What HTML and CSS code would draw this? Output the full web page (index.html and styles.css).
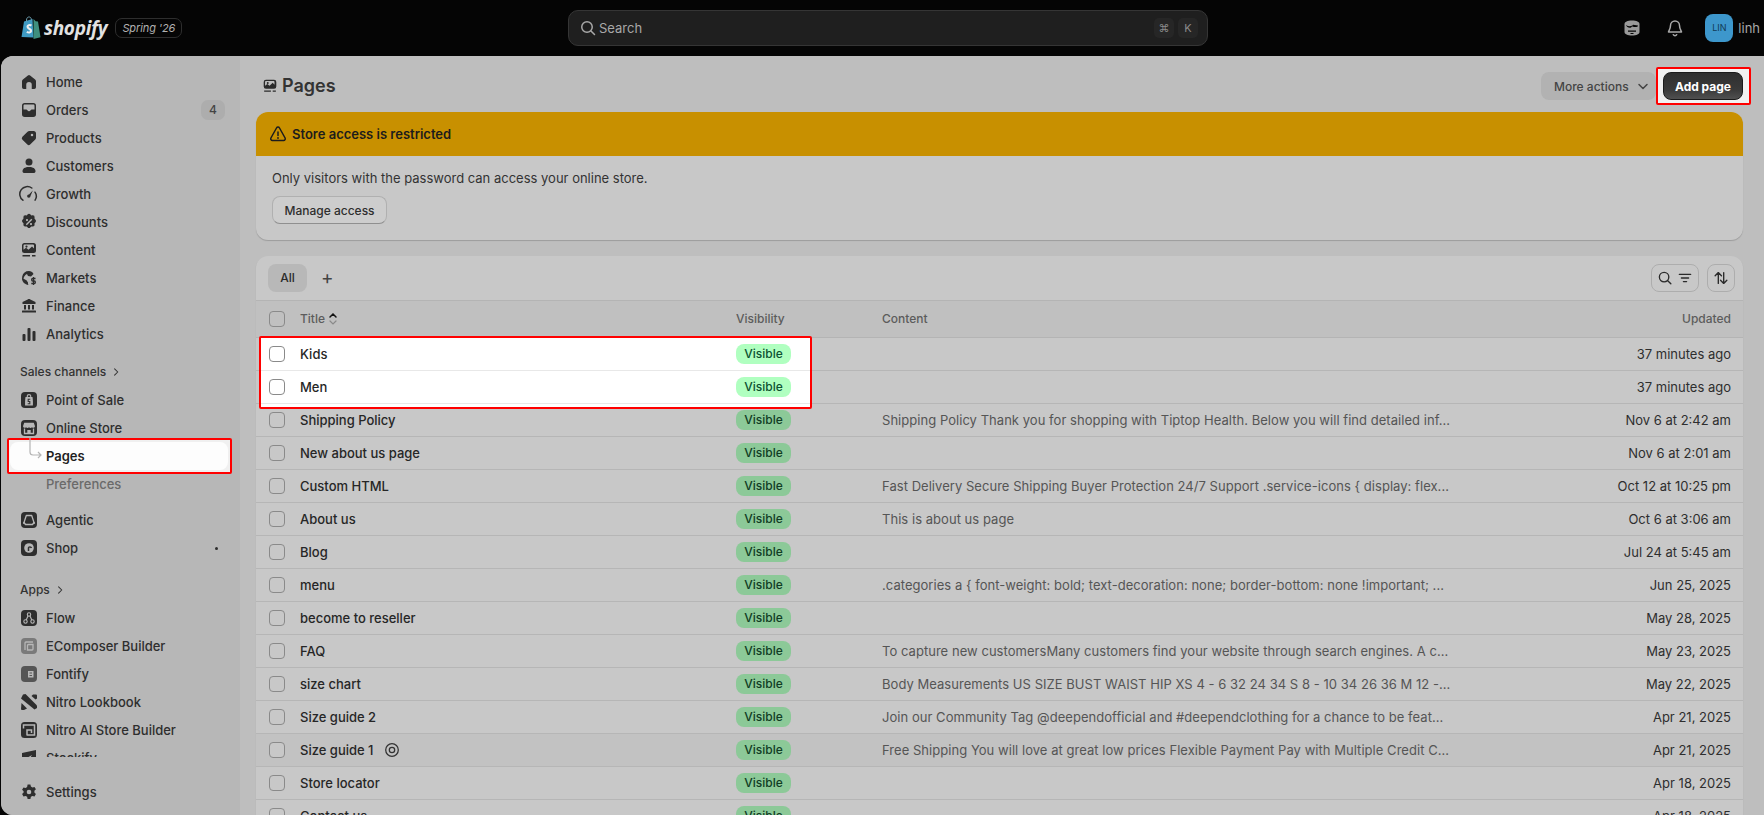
FILE: index.html
```html
<!DOCTYPE html>
<html lang="en">
<head>
    <meta charset="UTF-8">
    <title>Pages - Shopify</title>
    <link rel="stylesheet" href="styles.css">
</head>
<body>
    <svg class="sprite" xmlns="http://www.w3.org/2000/svg">
        <symbol id="i-home" viewBox="0 0 20 20"><path d="M8.900 3.400a1.750 1.750 0 0 1 2.200 0l5 4.100c.57.47.9 1.170.9 1.900v5.850A1.750 1.750 0 0 1 15.250 17h-2.500v-4.250a2.750 2.750 0 0 0-5.500 0V17h-2.500A1.750 1.750 0 0 1 3 15.250V9.400c0-.73.33-1.430.9-1.900z"/></symbol>
        <symbol id="i-orders" viewBox="0 0 20 20"><path fill-rule="evenodd" d="M5.750 3A2.750 2.750 0 0 0 3 5.750v8.500A2.750 2.750 0 0 0 5.750 17h8.500A2.750 2.750 0 0 0 17 14.250v-8.500A2.750 2.750 0 0 0 14.250 3zM4.500 5.750c0-.69.56-1.250 1.250-1.250h8.500c.69 0 1.250.56 1.250 1.250V9.500h-2.700c-.55 0-.95.3-1.200.8-.3.6-.9.95-1.600.95s-1.300-.35-1.600-.95c-.25-.5-.65-.8-1.200-.8H4.500z"/></symbol>
        <symbol id="i-products" viewBox="0 0 20 20"><path fill-rule="evenodd" d="M10.300 3h4.200A2.500 2.500 0 0 1 17 5.500v4.200c0 .66-.26 1.300-.73 1.770l-5.100 5.100a2 2 0 0 1-2.830 0l-4.900-4.900a2 2 0 0 1 0-2.840l5.100-5.100A2.500 2.500 0 0 1 10.300 3zM13 8.250a1.250 1.250 0 1 0 0-2.500 1.250 1.250 0 0 0 0 2.500z"/></symbol>
        <symbol id="i-customers" viewBox="0 0 20 20"><circle cx="10" cy="6" r="3.500"/><path d="M3.500 15.200c0-2.600 2.400-4.200 6.500-4.200s6.500 1.600 6.500 4.200c0 1.100-.8 1.800-2 1.800h-9c-1.200 0-2-.7-2-1.800z"/></symbol>
        <symbol id="i-growth" viewBox="0 0 20 20"><path fill="none" stroke="currentColor" stroke-width="1.500" stroke-linecap="round" d="M3.900 16.200A7.200 7.200 0 0 1 12.800 4M16 8.200A7.200 7.200 0 0 1 16.100 16.200"/><path d="M13.800 6.400 11.500 12a1.700 1.700 0 1 1-1.500-1.600z"/></symbol>
        <symbol id="i-discounts" viewBox="0 0 20 20"><path fill-rule="evenodd" d="M8.500 2.600a2 2 0 0 1 3 0l.8.8 1.100-.1a2 2 0 0 1 2.200 2.200l-.1 1.100.8.8a2 2 0 0 1 0 3l-.8.8.1 1.100a2 2 0 0 1-2.200 2.200l-1.100-.1-.8.8a2 2 0 0 1-3 0l-.8-.8-1.100.1a2 2 0 0 1-2.200-2.200l.1-1.100-.8-.8a2 2 0 0 1 0-3l.8-.8-.1-1.100a2 2 0 0 1 2.200-2.200l1.100.1zM12.300 6.800l-5.500 5.400 1 1 5.500-5.400zM8 7a1.100 1.100 0 1 0 0 2.200A1.100 1.100 0 0 0 8 7zm4 4a1.100 1.100 0 1 0 0 2.200 1.100 1.100 0 0 0 0-2.200z"/></symbol>
        <symbol id="i-content" viewBox="0 0 20 20"><path fill-rule="evenodd" d="M5.500 3h9A2.500 2.500 0 0 1 17 5.500v5a2.500 2.500 0 0 1-2.500 2.500h-9A2.500 2.500 0 0 1 3 10.500v-5A2.500 2.500 0 0 1 5.500 3zm0 1.500a1 1 0 0 0-1 1v4.300l2.500-2 2.500 2 3.500-3.300 2 2V5.500a1 1 0 0 0-1-1zM7.500 5.500a1.100 1.100 0 1 0 0 2.200 1.100 1.100 0 0 0 0-2.200z"/><path d="M3.500 15h7.500v1.500H3.500zM13 15h3.500v1.500H13z"/></symbol>
        <symbol id="i-markets" viewBox="0 0 20 20"><path d="M10 3a7 7 0 0 0-3 13.300c.6.300 1.400.6 2.400.7-.4-.8-.5-1.600-.4-2.500l-1.500-2.200-3-1.500c.2-2.200 1.600-4 3.500-4.900l1 2 3 .5 2.500-2.500C13.500 3.900 11.800 3 10 3z"/><path fill="none" stroke="currentColor" stroke-width="1.300" d="M16.500 10.500h-2.800c-1.400 0-1.400 2.500 0 2.500h1.600c1.400 0 1.400 2.500 0 2.500h-3M14.500 9v8"/></symbol>
        <symbol id="i-finance" viewBox="0 0 20 20"><path d="M8.700 3.400c.8-.4 1.800-.4 2.600 0l5.200 2.700V8H3.500V6.100zM5 9h2v4.500H5zM9 9h2v4.500H9zM13 9h2v4.500h-2zM3.500 14.500h13c.3 0 .5.200.5.500v1.500H3V15c0-.3.200-.5.500-.5z"/></symbol>
        <symbol id="i-analytics" viewBox="0 0 20 20"><rect x="3.500" y="10" width="3" height="7" rx="1"/><rect x="8.500" y="4" width="3" height="13" rx="1"/><rect x="13.500" y="7" width="3" height="10" rx="1"/></symbol>
        <symbol id="i-settings" viewBox="0 0 20 20"><path fill-rule="evenodd" d="M8.600 2.500h2.800l.5 2.100 1.500.9 2.100-.6 1.400 2.400-1.500 1.500v1.800l1.500 1.500-1.400 2.400-2.100-.6-1.500.9-.5 2.100H8.600l-.5-2.100-1.500-.9-2.100.6-1.400-2.400 1.500-1.500V9.300L3.100 7.800l1.400-2.400 2.100.6 1.500-.9zM10 7.700a2.300 2.300 0 1 0 0 4.600 2.300 2.300 0 0 0 0-4.600z"/></symbol>
        <symbol id="i-pos" viewBox="0 0 20 20"><rect x="2" y="2" width="16" height="16" rx="4"/><path fill="#b7b7b7" d="M6.500 7h7c.4 2.500.5 5.500.4 8.500H6.100c-.1-3 0-6 .4-8.500z"/><path fill="none" stroke="#b7b7b7" stroke-width="1.100" d="M8.300 7V5.800c0-1.600 3.400-1.600 3.400 0V7"/><path fill="none" stroke="#333" stroke-width="1.100" d="M11.300 9.300H9.200v2.200h1.600v2.200H8.700"/></symbol>
        <symbol id="i-store" viewBox="0 0 20 20"><rect x="2" y="2" width="16" height="16" rx="4"/><path fill="#b7b7b7" d="M5.200 4.800h9.600l1.200 3.500a1.800 1.800 0 0 1-3 1 2.300 2.300 0 0 1-3 0 2.300 2.300 0 0 1-3 0 1.800 1.800 0 0 1-3-1z"/><path fill="none" stroke="#b7b7b7" stroke-width="1.300" d="M5.500 10.500v5h9v-5"/><path fill="#b7b7b7" d="M8.300 12h3.400v3.500H8.300z"/></symbol>
        <symbol id="i-agentic" viewBox="0 0 20 20"><rect x="2" y="2" width="16" height="16" rx="4"/><path fill="none" stroke="#b7b7b7" stroke-width="1.300" stroke-linejoin="round" d="M7.300 5.500h5.400l2.300 7-1.500 2H6.500l-1.500-2z"/><circle cx="5" cy="13" r="1.100" fill="#b7b7b7"/><circle cx="15" cy="13" r="1.100" fill="#b7b7b7"/></symbol>
        <symbol id="i-shop" viewBox="0 0 20 20"><rect x="2" y="2" width="16" height="16" rx="4"/><circle cx="10" cy="10" r="4.800" fill="#b7b7b7"/><path fill="none" stroke="#333" stroke-width="1.500" d="M9.500 13V9.800c0-.9 2.500-1.500 3 .2"/></symbol>
        <symbol id="i-flow" viewBox="0 0 20 20"><rect x="2" y="2" width="16" height="16" rx="4"/><g fill="none" stroke="#b7b7b7" stroke-width="1.100"><circle cx="10" cy="6.500" r="1.700"/><circle cx="6.500" cy="13.500" r="1.700"/><circle cx="13.500" cy="13.500" r="1.700"/><path d="M9 8l-1.800 4M11 8l1.800 4"/></g></symbol>
        <symbol id="i-ecomposer" viewBox="0 0 20 20"><rect x="2" y="2" width="16" height="16" rx="4" fill="#7a7a7a"/><path fill="none" stroke="#b7b7b7" stroke-width="1.300" d="M6 14V7a1 1 0 0 1 1-1h7M8.500 14V9.500a1 1 0 0 1 1-1H14V13a1 1 0 0 1-1 1z"/></symbol>
        <symbol id="i-fontify" viewBox="0 0 20 20"><rect x="2" y="2" width="16" height="16" rx="4" fill="#555"/><path fill="#b7b7b7" d="M9 7h5.500v6.500H9zM10.500 8.500v1h2.500v-1zm0 2.500v1h2.500v-1z"/></symbol>
        <symbol id="i-lookbook" viewBox="0 0 20 20"><path d="M4 2.500l2.500-.5L18 13.500V16l-2.500 1.500L2 6.500z"/><path d="M2.500 11l5.500 5.500-3 1.500H3a1 1 0 0 1-1-1z"/><path d="M14 2.500h3a1 1 0 0 1 1 1v3l-1.500 1L12.500 4z"/></symbol>
        <symbol id="i-nitro" viewBox="0 0 20 20"><rect x="2" y="2" width="16" height="16" rx="3.500"/><path fill="none" stroke="#b7b7b7" stroke-width="1.500" d="M4.500 8.500V5h11v10h-8M8 15v-5h4.500v3"/></symbol>
        <symbol id="i-stockify" viewBox="0 0 20 20"><path d="M3 5l14-3v16H3zm3 6v4h2l5-8z"/></symbol>
        <symbol id="i-search" viewBox="0 0 20 20"><path fill="none" stroke="currentColor" stroke-width="1.500" stroke-linecap="round" d="M13 13l3.500 3.500"/><circle cx="9" cy="9" r="5.250" fill="none" stroke="currentColor" stroke-width="1.500"/></symbol>
        <symbol id="i-filter" viewBox="0 0 20 20"><path fill="none" stroke="currentColor" stroke-width="1.500" stroke-linecap="round" d="M3.750 6h12.500M6 10h8M8.250 14h3.500"/></symbol>
        <symbol id="i-sort" viewBox="0 0 20 20"><path fill="none" stroke="currentColor" stroke-width="1.500" stroke-linecap="round" stroke-linejoin="round" d="M7 16V4M3.500 7.500 7 4l3.500 3.500M13 4v12M9.500 12.500 13 16l3.500-3.500"/></symbol>
        <symbol id="i-chev" viewBox="0 0 20 20"><path fill="none" stroke="currentColor" stroke-width="1.500" stroke-linecap="round" stroke-linejoin="round" d="M6 8.500 10 12.500 14 8.500"/></symbol>
        <symbol id="i-right" viewBox="0 0 20 20"><path fill="none" stroke="currentColor" stroke-width="1.500" stroke-linecap="round" stroke-linejoin="round" d="M8 5.500 12.500 10 8 14.500"/></symbol>
        <symbol id="i-warn" viewBox="0 0 20 20"><path fill="none" stroke="currentColor" stroke-width="1.500" stroke-linejoin="round" d="M8.500 4 2.900 14a1.700 1.700 0 0 0 1.500 2.500h11.200a1.700 1.700 0 0 0 1.500-2.500L11.500 4a1.700 1.700 0 0 0-3 0z"/><path fill="none" stroke="currentColor" stroke-width="1.500" stroke-linecap="round" d="M10 8v3.500"/><circle cx="10" cy="14" r=".9"/></symbol>
        <symbol id="i-eye" viewBox="0 0 20 20"><circle cx="10" cy="10" r="7" fill="none" stroke="currentColor" stroke-width="1.400"/><circle cx="10" cy="10" r="3" fill="none" stroke="currentColor" stroke-width="1.400"/></symbol>
        <symbol id="i-bell" viewBox="0 0 20 20"><path fill="none" stroke="currentColor" stroke-width="1.500" stroke-linejoin="round" d="M10 3a4.500 4.500 0 0 0-4.500 4.500c0 3.500-2 5.500-2 6.500h13c0-1-2-3-2-6.500A4.500 4.500 0 0 0 10 3z"/><path fill="none" stroke="currentColor" stroke-width="1.500" stroke-linecap="round" d="M8.300 16.700a2 2 0 0 0 3.400 0"/></symbol>
        <symbol id="i-db" viewBox="0 0 20 20"><path d="M2.500 6c0-2 3-3.500 7.500-3.500S17.500 4 17.500 6v8c0 2-3 3.500-7.500 3.500S2.500 16 2.500 14z"/><path fill="#050505" d="M4 7c2.500 1.700 6 1.500 7-.3l5 .8c0 1-1 1.500-3 1.500-1.500 0-2.500-.5-3-.5l-1 1c-2 .7-4.500-.5-5-2.500zM6 12.500h8v1.300H6zM8.500 15h3v1h-3z"/></symbol>
    </svg>

    <header class="topbar">
        <div class="brand">
            <svg class="bag" viewBox="0 0 20 24">
                <path fill="#3f9bc4" d="M1 21 3.500 5.500 12 3l1 18.500z"/>
                <path fill="#3f8f7e" d="M13 3l2.200 2.200 2.300.2L20 21.300 13 23z"/>
                <path fill="none" stroke="#6f9fb0" stroke-width="1" d="M6 5.500V4c0-2 1.500-3.300 3-3s2 2 2 3.500"/>
                <path fill="none" stroke="#eeeeee" stroke-width="2.100" d="M11 9.500c-2-1-4-.2-4 1.300 0 2 4 2 3.600 4.300-.3 1.600-2.600 1.700-4.300.7"/>
            </svg>
            <span class="wordmark">shopify</span>
            <span class="edition">Spring '26</span>
        </div>
        <div class="search-box">
            <svg class="icon"><use href="#i-search"/></svg>
            <span class="search-text">Search</span>
            <kbd>⌘</kbd>
            <kbd>K</kbd>
        </div>
        <div class="top-actions">
            <svg class="icon top-db"><use href="#i-db"/></svg>
            <svg class="icon top-bell"><use href="#i-bell"/></svg>
            <span class="avatar">LIN</span>
            <span class="user-name">linh</span>
        </div>
    </header>

    <div class="shell">
        <aside class="sidebar">
            <nav class="nav-scroll">
                <a class="nav-item"><svg class="icon"><use href="#i-home"/></svg>Home</a>
                <a class="nav-item"><svg class="icon"><use href="#i-orders"/></svg>Orders<span class="count">4</span></a>
                <a class="nav-item"><svg class="icon"><use href="#i-products"/></svg>Products</a>
                <a class="nav-item"><svg class="icon"><use href="#i-customers"/></svg>Customers</a>
                <a class="nav-item"><svg class="icon"><use href="#i-growth"/></svg>Growth</a>
                <a class="nav-item"><svg class="icon"><use href="#i-discounts"/></svg>Discounts</a>
                <a class="nav-item"><svg class="icon"><use href="#i-content"/></svg>Content</a>
                <a class="nav-item"><svg class="icon"><use href="#i-markets"/></svg>Markets</a>
                <a class="nav-item"><svg class="icon"><use href="#i-finance"/></svg>Finance</a>
                <a class="nav-item"><svg class="icon"><use href="#i-analytics"/></svg>Analytics</a>

                <div class="nav-label label-sales">Sales channels<svg class="icon-sm"><use href="#i-right"/></svg></div>
                <a class="nav-item"><svg class="icon"><use href="#i-pos"/></svg>Point of Sale</a>
                <a class="nav-item"><svg class="icon"><use href="#i-store"/></svg>Online Store</a>
                <div class="nav-frame">
                    <a class="nav-item nav-active">Pages</a>
                    <svg class="tree" viewBox="0 0 14 22"><path fill="none" stroke="#b5b5b5" stroke-width="1.200" d="M1 0v14a3 3 0 0 0 3 3h8M9 14l3 3-3 3"/></svg>
                </div>
                <a class="nav-item nav-sub">Preferences</a>
                <a class="nav-item nav-gap"><svg class="icon"><use href="#i-agentic"/></svg>Agentic</a>
                <a class="nav-item"><svg class="icon"><use href="#i-shop"/></svg>Shop<span class="dot"></span></a>

                <div class="nav-label label-apps">Apps<svg class="icon-sm"><use href="#i-right"/></svg></div>
                <a class="nav-item"><svg class="icon"><use href="#i-flow"/></svg>Flow</a>
                <a class="nav-item"><svg class="icon"><use href="#i-ecomposer"/></svg>EComposer Builder</a>
                <a class="nav-item"><svg class="icon"><use href="#i-fontify"/></svg>Fontify</a>
                <a class="nav-item"><svg class="icon"><use href="#i-lookbook"/></svg>Nitro Lookbook</a>
                <a class="nav-item"><svg class="icon"><use href="#i-nitro"/></svg>Nitro AI Store Builder</a>
                <a class="nav-item"><svg class="icon"><use href="#i-stockify"/></svg>Stockify</a>
            </nav>
            <div class="nav-footer">
                <a class="nav-item"><svg class="icon"><use href="#i-settings"/></svg>Settings</a>
            </div>
        </aside>

        <main class="content">
            <div class="page-head">
                <svg class="icon head-icon"><use href="#i-content"/></svg>
                <h1>Pages</h1>
                <button class="btn-more">More actions<svg class="icon"><use href="#i-chev"/></svg></button>
                <div class="add-frame">
                    <button class="btn-add">Add page</button>
                </div>
            </div>

            <section class="card banner">
                <div class="banner-head">
                    <svg class="icon"><use href="#i-warn"/></svg>
                    <span>Store access is restricted</span>
                </div>
                <div class="banner-body">
                    <p>Only visitors with the password can access your online store.</p>
                    <button class="btn">Manage access</button>
                </div>
            </section>

            <section class="card list">
                <div class="list-toolbar">
                    <span class="tab">All</span>
                    <span class="tab-add">+</span>
                    <span class="tool-btn tool-wide"><svg class="icon"><use href="#i-search"/></svg><svg class="icon"><use href="#i-filter"/></svg></span>
                    <span class="tool-btn"><svg class="icon"><use href="#i-sort"/></svg></span>
                </div>
                <div class="table-wrap">
                    <div class="spot"></div>
                    <table>
                        <thead>
                            <tr>
                                <th class="col-check"><span class="check"></span></th>
                                <th class="col-title">Title <span class="sort-mark"><svg viewBox="0 0 10 14"><path fill="none" stroke="#111" stroke-width="1.500" stroke-linecap="round" d="M2 5l3-3 3 3"/><path fill="none" stroke="#8a8a8a" stroke-width="1.200" stroke-linecap="round" d="M2 9l3 3 3-3"/></svg></span></th>
                                <th class="col-vis">Visibility</th>
                                <th class="col-body">Content</th>
                                <th class="col-date">Updated</th>
                            </tr>
                        </thead>
                        <tbody>
                            <tr class="lit">
                                <td><span class="check"></span></td>
                                <td class="name">Kids</td>
                                <td><span class="badge">Visible</span></td>
                                <td class="excerpt"></td>
                                <td class="date">37 minutes ago</td>
                            </tr>
                            <tr class="lit">
                                <td><span class="check"></span></td>
                                <td class="name">Men</td>
                                <td><span class="badge">Visible</span></td>
                                <td class="excerpt"></td>
                                <td class="date">37 minutes ago</td>
                            </tr>
                            <tr>
                                <td><span class="check"></span></td>
                                <td class="name">Shipping Policy</td>
                                <td><span class="badge">Visible</span></td>
                                <td class="excerpt">Shipping Policy Thank you for shopping with Tiptop Health. Below you will find detailed inf...</td>
                                <td class="date">Nov 6 at 2:42 am</td>
                            </tr>
                            <tr>
                                <td><span class="check"></span></td>
                                <td class="name">New about us page</td>
                                <td><span class="badge">Visible</span></td>
                                <td class="excerpt"></td>
                                <td class="date">Nov 6 at 2:01 am</td>
                            </tr>
                            <tr>
                                <td><span class="check"></span></td>
                                <td class="name">Custom HTML</td>
                                <td><span class="badge">Visible</span></td>
                                <td class="excerpt">Fast Delivery Secure Shipping Buyer Protection 24/7 Support .service-icons { display: flex...</td>
                                <td class="date">Oct 12 at 10:25 pm</td>
                            </tr>
                            <tr>
                                <td><span class="check"></span></td>
                                <td class="name">About us</td>
                                <td><span class="badge">Visible</span></td>
                                <td class="excerpt">This is about us page</td>
                                <td class="date">Oct 6 at 3:06 am</td>
                            </tr>
                            <tr>
                                <td><span class="check"></span></td>
                                <td class="name">Blog</td>
                                <td><span class="badge">Visible</span></td>
                                <td class="excerpt"></td>
                                <td class="date">Jul 24 at 5:45 am</td>
                            </tr>
                            <tr>
                                <td><span class="check"></span></td>
                                <td class="name">menu</td>
                                <td><span class="badge">Visible</span></td>
                                <td class="excerpt">.categories a { font-weight: bold; text-decoration: none; border-bottom: none !important; ...</td>
                                <td class="date">Jun 25, 2025</td>
                            </tr>
                            <tr>
                                <td><span class="check"></span></td>
                                <td class="name">become to reseller</td>
                                <td><span class="badge">Visible</span></td>
                                <td class="excerpt"></td>
                                <td class="date">May 28, 2025</td>
                            </tr>
                            <tr>
                                <td><span class="check"></span></td>
                                <td class="name">FAQ</td>
                                <td><span class="badge">Visible</span></td>
                                <td class="excerpt">To capture new customersMany customers find your website through search engines. A c...</td>
                                <td class="date">May 23, 2025</td>
                            </tr>
                            <tr>
                                <td><span class="check"></span></td>
                                <td class="name">size chart</td>
                                <td><span class="badge">Visible</span></td>
                                <td class="excerpt">Body Measurements US SIZE BUST WAIST HIP XS 4 - 6 32 24 34 S 8 - 10 34 26 36 M 12 -...</td>
                                <td class="date">May 22, 2025</td>
                            </tr>
                            <tr>
                                <td><span class="check"></span></td>
                                <td class="name">Size guide 2</td>
                                <td><span class="badge">Visible</span></td>
                                <td class="excerpt">Join our Community Tag @deependofficial and #deependclothing for a chance to be feat...</td>
                                <td class="date">Apr 21, 2025</td>
                            </tr>
                            <tr class="hovered">
                                <td><span class="check"></span></td>
                                <td class="name">Size guide 1<svg class="icon eye"><use href="#i-eye"/></svg></td>
                                <td><span class="badge">Visible</span></td>
                                <td class="excerpt">Free Shipping You will love at great low prices Flexible Payment Pay with Multiple Credit C...</td>
                                <td class="date">Apr 21, 2025</td>
                            </tr>
                            <tr>
                                <td><span class="check"></span></td>
                                <td class="name">Store locator</td>
                                <td><span class="badge">Visible</span></td>
                                <td class="excerpt"></td>
                                <td class="date">Apr 18, 2025</td>
                            </tr>
                            <tr>
                                <td><span class="check"></span></td>
                                <td class="name">Contact us</td>
                                <td><span class="badge">Visible</span></td>
                                <td class="excerpt"></td>
                                <td class="date">Apr 18, 2025</td>
                            </tr>
                        </tbody>
                    </table>
                </div>
            </section>
        </main>
    </div>
</body>
</html>
```

FILE: styles.css
```css
* {
    margin: 0;
    padding: 0;
    box-sizing: border-box;
}
html, body {
    height: 815px;
    overflow: hidden;
}
body {
    font-family: Inter, "Liberation Sans", sans-serif;
    font-size: 13px;
    line-height: 20px;
    color: #2b2b2b;
    background-color: #050505;
    display: flex;
    flex-direction: column;
}
.sprite {
    display: none;
}
.icon {
    width: 20px;
    height: 20px;
    flex: none;
    fill: currentColor;
}
.icon-sm {
    width: 14px;
    height: 14px;
    margin-left: 3px;
    fill: currentColor;
}

/* top bar */
.topbar {
    height: 56px;
    flex: none;
    display: flex;
    align-items: center;
    position: relative;
    padding: 0 4px 0 20px;
}
.brand {
    display: flex;
    align-items: center;
    width: 548px;
}
.bag {
    width: 21px;
    height: 24px;
    margin-right: 3px;
}
.wordmark {
    font-family: "Open Sans", sans-serif;
    font-size: 19px;
    font-weight: 700;
    font-style: italic;
    letter-spacing: -0.3px;
    color: #e2e2e2;
}
.edition {
    margin-left: 8px;
    height: 20px;
    padding: 0 6px;
    border: 1px solid #2e2e2e;
    border-radius: 7px;
    font-size: 11px;
    line-height: 18px;
    font-style: italic;
    letter-spacing: -0.1px;
    color: #b0b0b0;
}
.search-box {
    width: 640px;
    height: 36px;
    display: flex;
    align-items: center;
    gap: 4px;
    padding: 0 9px 0 9px;
    background-color: #1f1f1f;
    border: 1px solid #353535;
    border-radius: 10px;
    color: #a8a8a8;
}
.search-text {
    flex: 1;
    margin-left: -3px;
}
kbd {
    width: 20px;
    height: 20px;
    background-color: #262626;
    border-radius: 5px;
    font-family: Inter, sans-serif;
    font-size: 11px;
    text-align: center;
    color: #8a8a8a;
}
.top-actions {
    margin-left: auto;
    display: flex;
    align-items: center;
    color: #a8a8a8;
}
.top-db {
    margin-right: 23px;
    color: #9a9a9a;
}
.top-bell {
    margin-right: 20px;
}
.avatar {
    width: 28px;
    height: 28px;
    border-radius: 8px;
    background-color: #3d97cc;
    color: #123b55;
    font-size: 9px;
    line-height: 28px;
    text-align: center;
}
.user-name {
    margin-left: 5px;
    font-size: 13px;
}

/* page shell */
.shell {
    flex: 1;
    min-height: 0;
    display: flex;
    margin-left: 1px;
    background-color: #bebebe;
    border-radius: 12px 0 0 12px;
    overflow: hidden;
}
.sidebar {
    width: 239px;
    flex: none;
    display: flex;
    flex-direction: column;
    background-color: #b7b7b7;
}
.nav-scroll {
    height: 701px;
    padding-top: 12px;
    overflow: hidden;
}
.nav-footer {
    margin-top: 21px;
}
.nav-item {
    height: 28px;
    display: flex;
    align-items: center;
    gap: 7px;
    padding: 0 15px 0 18px;
    font-weight: 500;
    color: #2e2e2e;
}
.nav-frame {
    position: relative;
    margin: -4px 8px -4px 6px;
    padding: 2px 2px 2px 1px;
    background-color: #f0f0f0;
    border: 2px solid #ff0000;
    border-radius: 2px;
}
.nav-active {
    padding-left: 36px;
    background-color: #fdfdfd;
    border-radius: 8px;
    font-weight: 600;
    color: #1f1f1f;
}
.tree {
    position: absolute;
    left: 20px;
    top: -2px;
    width: 14px;
    height: 22px;
}
.nav-sub {
    padding-left: 45px;
    color: #6a6a6a;
}
.nav-gap {
    margin-top: 8px;
}
.nav-label {
    height: 28px;
    display: flex;
    align-items: center;
    padding-left: 19px;
    font-size: 12px;
    font-weight: 450;
    color: #333;
}
.label-sales {
    margin-top: 10px;
}
.label-apps {
    margin-top: 14px;
}
.count {
    margin-left: auto;
    min-width: 24px;
    height: 20px;
    border-radius: 7px;
    background-color: #adadad;
    font-size: 12px;
    text-align: center;
    color: #444;
}
.dot {
    margin-left: auto;
    margin-right: 7px;
    width: 3px;
    height: 3px;
    border-radius: 50%;
    background-color: #2e2e2e;
}

/* main column */
.content {
    flex: 1;
    min-width: 0;
    padding: 16px 21px 0 16px;
}
.page-head {
    height: 28px;
    display: flex;
    align-items: center;
    margin-bottom: 12px;
}
.head-icon {
    width: 18px;
    height: 18px;
    margin: 0 3px 0 5px;
}
h1 {
    flex: 1;
    font-size: 18px;
    font-weight: 600;
    color: #333;
}
button {
    font-family: inherit;
    font-size: 12px;
    font-weight: 550;
    border: none;
}
.btn-more {
    height: 28px;
    width: 115px;
    margin-left: 1px;
    display: flex;
    align-items: center;
    padding-left: 13px;
    gap: 4px;
    background-color: #b2b2b2;
    border-radius: 8px;
    color: #444;
}
.add-frame {
    margin: -5px -8px -5px 0;
    padding: 3px 6px 3px 5px;
    background-color: #f1f1f1;
    border: 2px solid #ff0000;
    border-radius: 2px;
}
.btn-add {
    display: block;
    width: 80px;
    height: 28px;
    background: linear-gradient(#2f2f2f, #3a3a3a 65%, #505050);
    border: 1px solid #1b1b1b;
    border-radius: 8px;
    color: #fff;
    font-weight: 650;
}
.card {
    background-color: #c8c8c8;
    border-radius: 12px;
    box-shadow: 0 1px 1px rgba(0, 0, 0, 0.18);
    overflow: hidden;
}
.banner {
    height: 128px;
    margin-bottom: 16px;
}
.banner-head {
    height: 44px;
    display: flex;
    align-items: center;
    gap: 4px;
    padding: 0 12px;
    background-color: #c89000;
    font-weight: 600;
    color: #1c1c1c;
}
.banner-body {
    padding: 12px 16px;
    color: #333;
}
.btn {
    display: block;
    margin-top: 8px;
    width: 115px;
    height: 28px;
    background-color: #cdcdcd;
    border: 1px solid #b0b0b0;
    border-bottom-color: #8f8f8f;
    border-radius: 8px;
    color: #2e2e2e;
}

/* pages list */
.list {
    height: 600px;
}
.list-toolbar {
    height: 45px;
    display: flex;
    align-items: center;
    padding: 0 8px 0 12px;
    border-bottom: 1px solid #b4b4b4;
}
.tab {
    width: 39px;
    height: 28px;
    background-color: #b8b8b8;
    border-radius: 8px;
    font-size: 12px;
    font-weight: 550;
    line-height: 28px;
    text-align: center;
    color: #2b2b2b;
}
.tab-add {
    margin-left: 11px;
    flex: 1;
    padding-left: 3px;
    font-size: 19px;
    color: #444;
}
.tool-btn {
    width: 28px;
    height: 28px;
    display: flex;
    align-items: center;
    justify-content: center;
    margin-left: 8px;
    border: 1px solid #adadad;
    border-radius: 8px;
    color: #2b2b2b;
}
.tool-wide {
    width: 48px;
}
.tool-wide .icon, .tool-btn .icon {
    width: 18px;
    height: 18px;
}
.tool-wide .icon {
    margin: 0 1px;
}
.table-wrap {
    position: relative;
}
.spot {
    position: absolute;
    left: 4px;
    top: 36px;
    width: 551px;
    height: 71px;
    background-color: #fff;
}
.spot::after {
    content: "";
    position: absolute;
    inset: -1px;
    border: 2.5px solid #ff0000;
    border-radius: 2px;
    z-index: 2;
}
table {
    width: 100%;
    border-collapse: collapse;
    table-layout: fixed;
    position: relative;
}
th {
    height: 36px;
    background-color: #c0c0c0;
    font-size: 12px;
    font-weight: 500;
    text-align: left;
    color: #5c5c5c;
    border-bottom: 1px solid #b4b4b4;
}
td {
    height: 33px;
    border-bottom: 1px solid rgba(0, 0, 0, 0.09);
    white-space: nowrap;
    overflow: hidden;
}
.col-check {
    width: 44px;
    padding-left: 13px;
}
.col-title {
    width: 436px;
}
.col-vis {
    width: 146px;
}
.col-body {
    width: 600px;
}
.col-date {
    text-align: right;
    padding-right: 12px;
}
td:first-child {
    padding-left: 13px;
}
.check {
    display: block;
    width: 16px;
    height: 16px;
    background-color: #c8c8c8;
    border: 1px solid #8a8a8a;
    border-radius: 4px;
}
th .check {
    background-color: #c0c0c0;
}
.lit .check {
    background-color: #fff;
}
.name {
    font-weight: 550;
    color: #262626;
}
.sort-mark svg {
    width: 10px;
    height: 14px;
    vertical-align: -3px;
}
.eye {
    width: 18px;
    height: 18px;
    margin-left: 9px;
    vertical-align: -4px;
    color: #333;
}
.badge {
    display: inline-block;
    width: 55px;
    height: 20px;
    background-color: #8cc998;
    border-radius: 8px;
    font-size: 12px;
    font-weight: 500;
    line-height: 20px;
    text-align: center;
    color: #103c25;
}
.lit .badge {
    background-color: #b0ffc0;
    color: #0c5132;
}
.excerpt {
    font-size: 13px;
    letter-spacing: 0.04px;
    color: #555;
}
.date {
    text-align: right;
    padding-right: 12px;
    color: #2e2e2e;
}
.hovered td {
    background-color: #c2c2c2;
}
```
